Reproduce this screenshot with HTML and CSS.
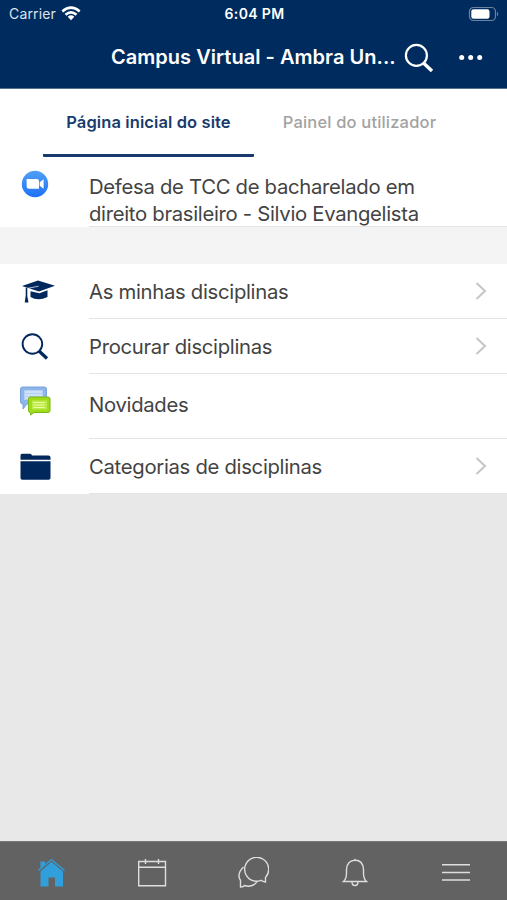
FILE: index.html
```html
<!DOCTYPE html>
<html lang="pt">
<head>
<meta charset="utf-8">
<title>Campus Virtual</title>
<link rel="stylesheet" href="styles.css">
</head>
<body>
<header class="header">
  <div class="status">
    <div class="status-left"><span class="carrier">Carrier</span>
      <svg width="20" height="15" viewBox="0 0 20 15" fill="none" stroke="#fff" stroke-width="2.6"><path d="M1.3 5.4Q10-2.2 18.7 5.4M4.5 8.8Q10 3.9 15.500 8.800"/><path d="M6.700 10.700Q10 7.900 13.300 10.700L10 14.200Z" fill="#fff" stroke="none"/></svg>
    </div>
    <span class="time">6:04 PM</span>
    <svg class="battery" width="32" height="16" viewBox="0 0 32 16"><rect x="1.500" y="1.500" width="26" height="13" rx="4" fill="none" stroke="#6d829e" stroke-width="1.200"/><rect x="3.300" y="3.300" width="18.200" height="9.400" rx="2.200" fill="#fff"/><path d="M29 5.500q2.500 2.500 0 5z" fill="#6d829e"/></svg>
  </div>
  <div class="titlebar">
    <h1 class="title">Campus Virtual - Ambra Un...</h1>
    <svg class="search" width="32" height="32" viewBox="0 0 32 32" fill="none" stroke="#fff"><circle cx="13.400" cy="13.400" r="10.500" stroke-width="2.200"/><path d="M20.500 21L29 29" stroke-width="3.500"/></svg>
    <svg class="more" width="24" height="6" viewBox="0 0 24 6" fill="#fff"><circle cx="2.700" cy="2.500" r="2.500"/><circle cx="11.700" cy="2.500" r="2.500"/><circle cx="20.700" cy="2.500" r="2.500"/></svg>
  </div>
</header>
<nav class="tabs">
  <a class="tab active"><span>Página inicial do site</span></a>
  <a class="tab"><span>Painel do utilizador</span></a>
</nav>
<main class="content">
  <section class="list">
    <div class="row event">
      <div class="icon"><svg width="28" height="28" viewBox="0 0 28 28"><defs><linearGradient id="zoom" x2="0" y2="1"><stop stop-color="#4fa0f5"/><stop offset="1" stop-color="#1f72f6"/></linearGradient></defs><circle cx="14" cy="14" r="13.200" fill="url(#zoom)"/><path d="M5.600 9h10.200q2.200 0 2.200 2v7.800H8q-2.400 0-2.400-2.400zM18.700 12.300L22.600 9.300v9.400l-3.900-3z" fill="#fff"/></svg></div>
      <div class="label"><div class="text">Defesa de TCC de bacharelado em<br>direito brasileiro - Silvio Evangelista</div></div>
    </div>
  </section>
  <section class="list menu">
    <div class="row">
      <div class="icon"><svg width="34" height="24" viewBox="0 0 34 24" fill="#00285c"><path d="M1 6L17 .4 34 5.800 18 11.400z"/><path d="M9.500 11.200V17Q17 21.500 26.500 17V10.300L18.500 13.300z"/><path d="M17.500 6.200L5.500 8.600" fill="none" stroke="#fff" stroke-width=".7"/><path d="M4.700 7.500v8l-1 7h3.800L6.300 16V8z"/></svg></div>
      <div class="label"><span class="text">As minhas disciplinas</span><svg class="chevron" width="12" height="18" viewBox="0 0 12 18"><path d="M1.500 1L10 9 1.500 17"/></svg></div>
    </div>
    <div class="row">
      <div class="icon"><svg width="28" height="28" viewBox="0 0 28 28" fill="none" stroke="#00285c"><circle cx="11.400" cy="11" r="9.800" stroke-width="1.900"/><path d="M18 18l8 7.500" stroke-width="3.200"/></svg></div>
      <div class="label"><span class="text">Procurar disciplinas</span><svg class="chevron" width="12" height="18" viewBox="0 0 12 18"><path d="M1.500 1L10 9 1.500 17"/></svg></div>
    </div>
    <div class="row news">
      <div class="icon"><svg width="32" height="30" viewBox="0 0 32 30"><path d="M2.500 1h22q2 0 2 2v13q0 2-2 2H7l-4 5v-5q-2.500 0-2.500-2V3q0-2 2-2z" fill="#8db5e9" stroke="#79a2dd"/><path d="M4 4h19v10H4z" fill="#b6d0f4"/><path d="M5 6h17M5 9h17M5 12h10" stroke="#e7f1ff"/><path d="M10 11h18q2 0 2 2v11.500q0 2-2 2H14L10.500 29v-2.500Q8.500 26.500 8.500 24.500V13q0-2 1.500-2z" fill="#a0dc18" stroke="#79b617"/><path d="M12 14.500h15v9H12z" fill="#bce94b"/><path d="M13.500 16.500h11M13.500 19h11M13.500 21.500h11" stroke="#edff9e" stroke-width="1.200"/></svg></div>
      <div class="label"><span class="text">Novidades</span></div>
    </div>
    <div class="row">
      <div class="icon folder"><svg width="32" height="28" viewBox="0 0 32 28" fill="#00285c"><path d="M.5 6.700V2.500Q.5.700 2 .700h8q1.200 0 2.200 1.900h16.300q2 0 2 2v2.100zM.500 8.200h30V25q0 1.800-1.800 1.800H2.300Q.500 26.800.500 25z"/></svg></div>
      <div class="label"><span class="text">Categorias de disciplinas</span><svg class="chevron" width="12" height="18" viewBox="0 0 12 18"><path d="M1.500 1L10 9 1.500 17"/></svg></div>
    </div>
  </section>
</main>
<footer class="bottom">
  <a><svg width="30" height="32" viewBox="0 0 30 32" fill="#309fdc"><path d="M4.500 14.500L15.500 4.800 27 14.500V29.500H19V20.500H12.500V29.500H4.500z"/><path d="M2.300 13.500L15.500 2.500 28.500 13.500" fill="none" stroke="#309fdc" stroke-width="1.300"/><path d="M4.500 13.300L15.500 4.200 26.500 13.300" fill="none" stroke="#4b7287" stroke-width=".9"/><path d="M4.500 4.500h4.500v3l-4.500 3.500z"/></svg></a>
  <a><svg width="30" height="32" viewBox="0 0 30 32"><path d="M1.700 4.500h26.800v24.200H1.700zM1.700 10.200h26.800M8.500 2v5M21.500 2v5"/></svg></a>
  <a><svg width="32" height="32" viewBox="0 0 32 32"><path d="M28.500 25V20.500A12 12 0 1 0 18.500 24.300Q21.500 24.300 24 23.300Q26 24.900 28.500 25z"/><path d="M6.500 10C2 14.500.500 19 3.500 23.500V30Q6.500 30 7.500 28.500C13 30.500 18 28 20.500 24"/></svg></a>
  <a><svg width="28" height="32" viewBox="0 0 28 32"><path d="M2.500 24.500Q5.500 22 5.500 16V12Q6.500 3.500 14 3.300T22.500 12v4q0 6 3 8.500zM11 25q0 3.500 3 3.500t3-3.500M14 3.300V1.700"/></svg></a>
  <a><svg width="30" height="32" viewBox="0 0 30 32"><path d="M1 7.800h28M1 15.500h28M1 23h28"/></svg></a>
</footer>
</body>
</html>
```

FILE: styles.css
```css
* { box-sizing: border-box; }
body {
  margin: 0;
  height: 900px;
  display: flex;
  flex-direction: column;
  background: #e8e8e8;
  font-family: Inter, "Liberation Sans", sans-serif;
  color: #434343;
  overflow: hidden;
}
svg { display: block; flex: none; }
span, h1, .text { white-space: nowrap; }
.header { height: 89px; flex: none; background: #002b5e; color: #fff; border-bottom: 1px solid #52708f; }
.status { height: 27px; display: grid; grid-template-columns: 1fr auto 1fr; align-items: center; padding: 0 7px 0 9px; }
.status-left { display: flex; align-items: center; gap: 5px; }
.carrier { font-size: 14px; letter-spacing: .15px; color: #dce4ed; }
.time { font-size: 14px; font-weight: 600; letter-spacing: .35px; }
.battery { justify-self: end; }
.titlebar { height: 61px; display: flex; align-items: center; padding-left: 111px; }
.title { width: 285px; margin: 0; font-size: 20px; font-weight: 600; line-height: 58px; letter-spacing: .03px; padding-bottom: 1px; }
.search { margin-left: 7px; }
.more { margin-left: 24px; }
.tabs { height: 68px; flex: none; display: flex; background: #fff; padding-left: 43px; }
.tab { width: 211px; display: flex; justify-content: center; line-height: 66px; font-size: 16.5px; font-weight: 500; letter-spacing: .18px; color: #a2a2a2; }
.active { color: #173b6c; font-weight: 600; letter-spacing: .1px; border-bottom: 3px solid #17396b; border-radius: 1px; }
.content { flex: 1; }
.list { background: #fff; }
.menu { margin-top: 37px; }
.row { display: flex; height: 55px; }
.icon { width: 89px; display: flex; align-items: center; padding-left: 21px; }
.label { flex: 1; display: flex; align-items: center; justify-content: space-between; border-bottom: 1px solid #e4e4e4; padding-right: 20px; font-size: 20.3px; letter-spacing: -.3px; line-height: 27px; }
.event { height: 70px; }
.event .icon { align-items: flex-start; padding-top: 13px; }
.event .label { align-items: flex-start; padding-top: 16px; padding-right: 0; }
.list:first-child { box-shadow: 0 37px #f4f4f4; }
.news { height: 65px; }
.news .icon { padding-left: 20px; padding-bottom: 11px; }
.news .label { padding-bottom: 4px; }
.folder { padding-left: 20px; }
.chevron { fill: none; stroke: #c5c5c5; stroke-width: 2; }
.bottom { height: 59px; flex: none; display: grid; grid-template-columns: repeat(5, 1fr); background: #626262; border-top: 1px solid #777; }
.bottom a { display: flex; align-items: center; justify-content: center; padding-top: 3px; }
.bottom a:not(:first-child) svg { fill: none; stroke: #dedede; stroke-width: 1.4; }
```
